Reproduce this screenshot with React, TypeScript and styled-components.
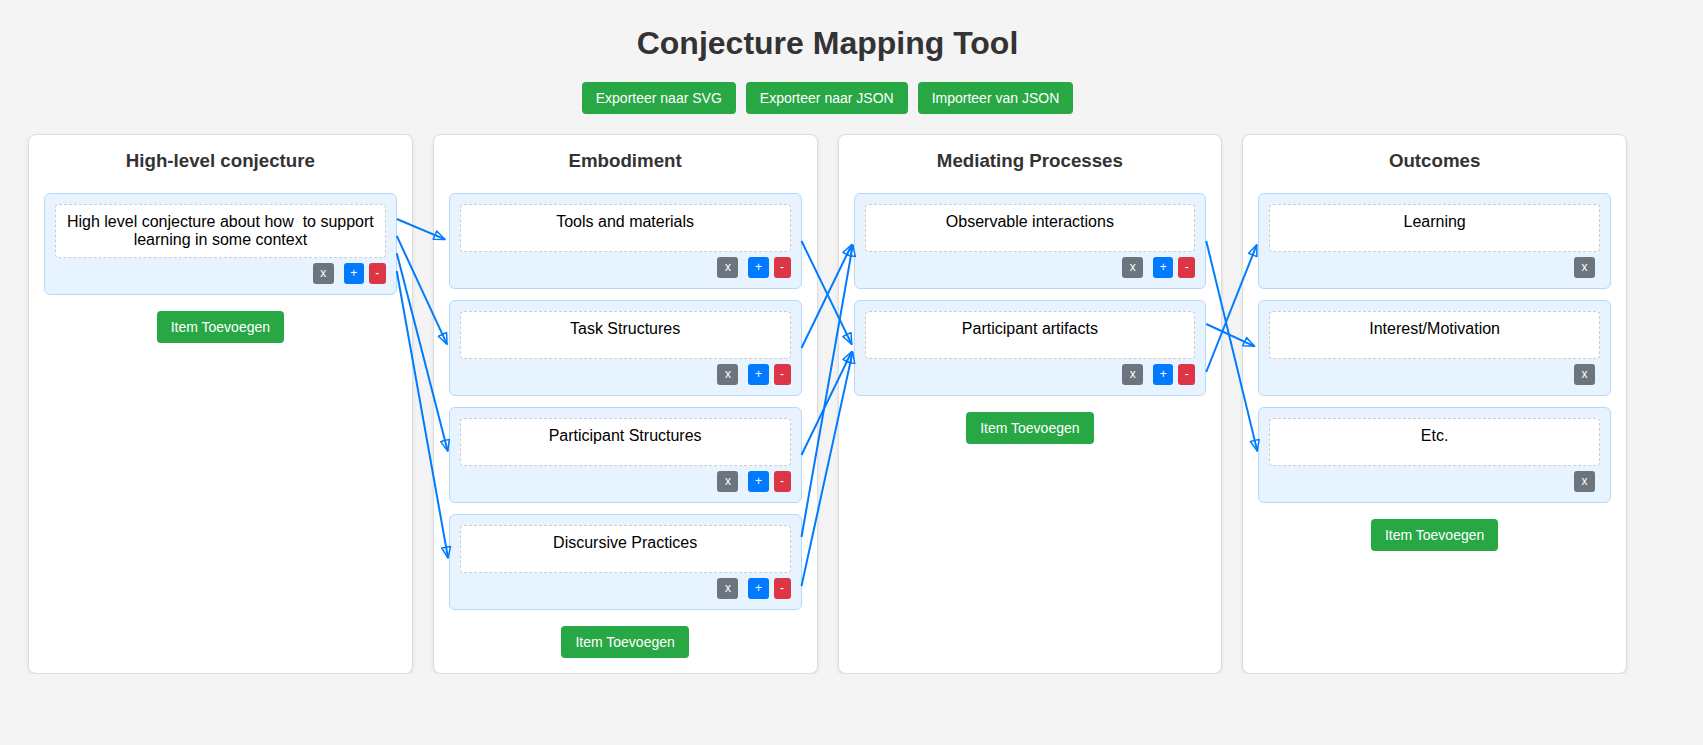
import React, { useLayoutEffect, useRef, useState } from "react";
import styled, { createGlobalStyle } from "styled-components";

const GlobalStyle = createGlobalStyle`
  html, body {
    margin: 0;
    padding: 0;
    background: #f4f4f4;
    font-family: "Liberation Sans", Arial, sans-serif;
  }
`;

const Page = styled.div`
  padding: 4px 0 0 28px;
`;

const Container = styled.div`
  width: 1599px;
  display: flex;
  flex-direction: column;
`;

const Title = styled.h1`
  margin: 21px 0 20px;
  font-size: 32px;
  font-weight: bold;
  color: #333;
  text-align: center;
`;

const Toolbar = styled.div`
  display: flex;
  justify-content: center;
  gap: 10px;
  margin-bottom: 20px;
`;

const GreenButton = styled.button`
  background: #28a745;
  color: #fff;
  border: none;
  border-radius: 4px;
  padding: 8px 14px;
  font-family: "Liberation Sans", Arial, sans-serif;
  font-size: 14px;
  line-height: 16px;
  cursor: pointer;
`;

const Board = styled.div`
  position: relative;
  display: flex;
  gap: 20px;
  align-items: stretch;
`;

const Column = styled.div`
  flex: 1 1 0;
  min-width: 0;
  background: #fff;
  border: 1px solid #ddd;
  border-radius: 8px;
  box-shadow: 0 2px 4px rgba(0, 0, 0, 0.08);
  padding: 15px;
  display: flex;
  flex-direction: column;
  min-height: 506px;
`;

const ColumnTitle = styled.h3`
  margin: 0 0 21px;
  font-size: 18.72px;
  font-weight: bold;
  color: #333;
  text-align: center;
`;

const CardList = styled.div`
  display: flex;
  flex-direction: column;
  gap: 11px;
`;

const Card = styled.div`
  background: #e7f3fe;
  border: 1px solid #b6d8fb;
  border-radius: 6px;
  padding: 10px;
`;

const ItemText = styled.div`
  background: #fff;
  border: 1px dashed #ccc;
  border-radius: 4px;
  padding: 8px;
  min-height: 30px;
  font-size: 16px;
  color: #000;
  text-align: center;
  white-space: pre-wrap;
`;

const ButtonRow = styled.div`
  display: flex;
  justify-content: flex-end;
  gap: 5px;
  margin-top: 5px;
`;

const SmallButton = styled.button<{ $variant: "gray" | "blue" | "red" }>`
  background: ${(p) =>
    p.$variant === "gray" ? "#6c757d" : p.$variant === "blue" ? "#007bff" : "#dc3545"};
  color: #fff;
  border: none;
  border-radius: 3px;
  padding: ${(p) => (p.$variant === "gray" ? "3px 7.5px" : "3px 6.5px")};
  font-family: "Liberation Sans", Arial, sans-serif;
  font-size: 12px;
  line-height: 15px;
  margin-right: ${(p) => (p.$variant === "gray" ? "5px" : "0")};
`;

const AddButton = styled(GreenButton)`
  align-self: center;
  margin-top: 16px;
`;

const Overlay = styled.svg`
  position: absolute;
  left: 0;
  top: 0;
  width: 100%;
  height: 100%;
  overflow: visible;
  pointer-events: none;
`;

type ColumnData = { title: string; items: string[]; connectable: boolean };

const columns: ColumnData[] = [
  {
    title: "High-level conjecture",
    items: ["High level conjecture about how  to support learning in some context"],
    connectable: true,
  },
  {
    title: "Embodiment",
    items: ["Tools and materials", "Task Structures", "Participant Structures", "Discursive Practices"],
    connectable: true,
  },
  {
    title: "Mediating Processes",
    items: ["Observable interactions", "Participant artifacts"],
    connectable: true,
  },
  {
    title: "Outcomes",
    items: ["Learning", "Interest/Motivation", "Etc."],
    connectable: false,
  },
];

type Conn = { from: [number, number, number]; to: [number, number] };

const connections: Conn[] = [
  { from: [0, 0, 0.255], to: [1, 0] },
  { from: [0, 0, 0.42], to: [1, 1] },
  { from: [0, 0, 0.59], to: [1, 2] },
  { from: [0, 0, 0.765], to: [1, 3] },
  { from: [1, 0, 0.5], to: [2, 1] },
  { from: [1, 1, 0.5], to: [2, 0] },
  { from: [1, 2, 0.5], to: [2, 1] },
  { from: [1, 3, 0.24], to: [2, 0] },
  { from: [1, 3, 0.75], to: [2, 1] },
  { from: [2, 0, 0.5], to: [3, 2] },
  { from: [2, 1, 0.25], to: [3, 1] },
  { from: [2, 1, 0.75], to: [3, 0] },
];

type Line = { x1: number; y1: number; x2: number; y2: number };

export default function App() {
  const boardRef = useRef<HTMLDivElement>(null);
  const cardRefs = useRef<Record<string, HTMLDivElement | null>>({});
  const [lines, setLines] = useState<Line[]>([]);

  useLayoutEffect(() => {
    const compute = () => {
      const board = boardRef.current;
      if (!board) return;
      const b = board.getBoundingClientRect();
      const out: Line[] = [];
      connections.forEach((c) => {
        const s = cardRefs.current[`${c.from[0]}-${c.from[1]}`];
        const t = cardRefs.current[`${c.to[0]}-${c.to[1]}`];
        if (!s || !t) return;
        const sr = s.getBoundingClientRect();
        const tr = t.getBoundingClientRect();
        const x1 = sr.right - b.left;
        const y1 = sr.top - b.top + sr.height * c.from[2];
        const ex = tr.left - b.left;
        const ey = tr.top - b.top + tr.height / 2;
        const dx = ex - x1;
        const dy = ey - y1;
        const len = Math.hypot(dx, dy);
        const x2 = ex - (dx / len) * 4;
        const y2 = ey - (dy / len) * 4;
        out.push({ x1, y1, x2, y2 });
      });
      setLines(out);
    };
    compute();
    window.addEventListener("resize", compute);
    return () => window.removeEventListener("resize", compute);
  }, []);

  return (
    <>
      <GlobalStyle />
      <Page>
        <Container>
          <Title>Conjecture Mapping Tool</Title>
          <Toolbar>
            <GreenButton>Exporteer naar SVG</GreenButton>
            <GreenButton>Exporteer naar JSON</GreenButton>
            <GreenButton>Importeer van JSON</GreenButton>
          </Toolbar>
          <Board ref={boardRef}>
            {columns.map((col, ci) => (
              <Column key={col.title}>
                <ColumnTitle>{col.title}</ColumnTitle>
                <CardList>
                  {col.items.map((item, ii) => (
                    <Card
                      key={item}
                      ref={(el) => {
                        cardRefs.current[`${ci}-${ii}`] = el;
                      }}
                    >
                      <ItemText>{item}</ItemText>
                      <ButtonRow>
                        <SmallButton $variant="gray">x</SmallButton>
                        {col.connectable && <SmallButton $variant="blue">+</SmallButton>}
                        {col.connectable && <SmallButton $variant="red">-</SmallButton>}
                      </ButtonRow>
                    </Card>
                  ))}
                </CardList>
                <AddButton>Item Toevoegen</AddButton>
              </Column>
            ))}
            <Overlay>
              <defs>
                <marker
                  id="arrowhead"
                  markerUnits="userSpaceOnUse"
                  viewBox="0 0 13 11"
                  markerWidth="13"
                  markerHeight="11"
                  refX="12"
                  refY="5.5"
                  orient="auto"
                >
                  <path d="M1,1 L12,5.5 L1,10 Z" fill="none" stroke="#007bff" strokeWidth="1.5" strokeLinejoin="round" />
                </marker>
              </defs>
              {lines.map((l, i) => (
                <line
                  key={i}
                  x1={l.x1}
                  y1={l.y1}
                  x2={l.x2}
                  y2={l.y2}
                  stroke="#007bff"
                  strokeWidth="2"
                  markerEnd="url(#arrowhead)"
                />
              ))}
            </Overlay>
          </Board>
        </Container>
      </Page>
    </>
  );
}
